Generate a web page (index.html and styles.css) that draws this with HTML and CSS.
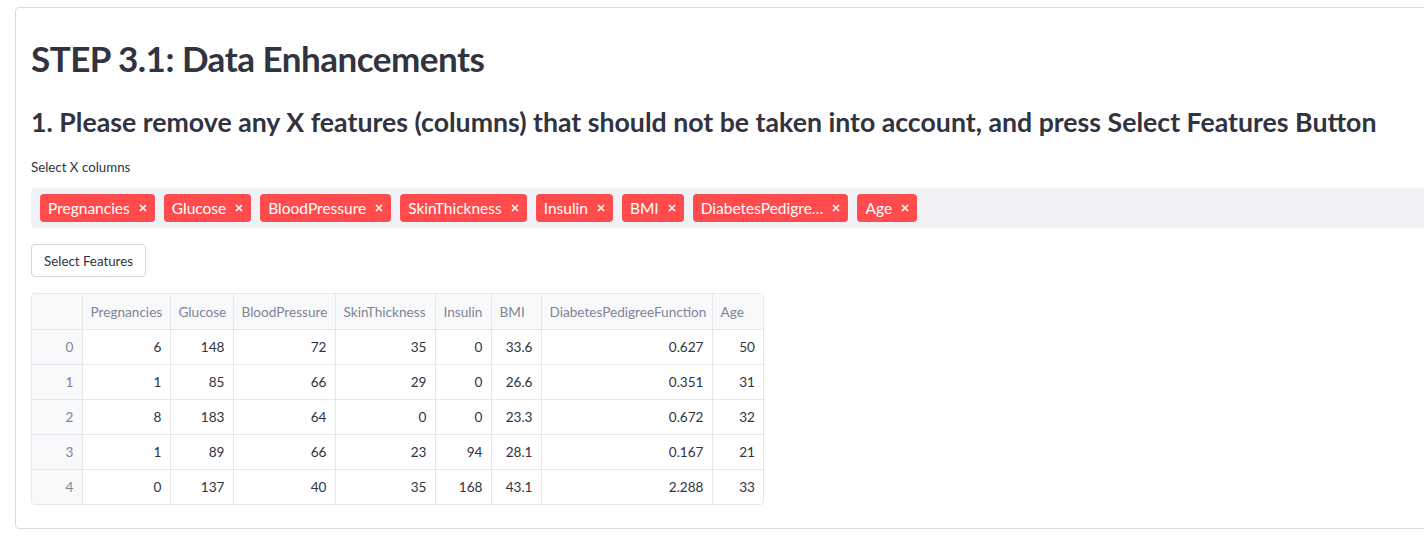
FILE: index.html
```html
<!DOCTYPE html>
<html lang="en">
<head>
<meta charset="utf-8">
<title>STEP 3.1: Data Enhancements</title>
<link rel="stylesheet" href="styles.css">
</head>
<body>
<main class="block">
  <h1 class="title">STEP 3.1: Data Enhancements</h1>
  <h2 class="subtitle">1. Please remove any X features (columns) that should not be taken into account, and press Select Features Button</h2>
  <div class="field-label">Select X columns</div>
  <div class="multiselect">
    <span class="tag"><span class="tag-text">Pregnancies</span><svg class="tag-x" viewBox="0 0 8 8"><path d="M1 1L7 7M7 1L1 7"/></svg></span>
    <span class="tag"><span class="tag-text">Glucose</span><svg class="tag-x" viewBox="0 0 8 8"><path d="M1 1L7 7M7 1L1 7"/></svg></span>
    <span class="tag"><span class="tag-text">BloodPressure</span><svg class="tag-x" viewBox="0 0 8 8"><path d="M1 1L7 7M7 1L1 7"/></svg></span>
    <span class="tag"><span class="tag-text">SkinThickness</span><svg class="tag-x" viewBox="0 0 8 8"><path d="M1 1L7 7M7 1L1 7"/></svg></span>
    <span class="tag"><span class="tag-text">Insulin</span><svg class="tag-x" viewBox="0 0 8 8"><path d="M1 1L7 7M7 1L1 7"/></svg></span>
    <span class="tag"><span class="tag-text">BMI</span><svg class="tag-x" viewBox="0 0 8 8"><path d="M1 1L7 7M7 1L1 7"/></svg></span>
    <span class="tag"><span class="tag-text">DiabetesPedigre…</span><svg class="tag-x" viewBox="0 0 8 8"><path d="M1 1L7 7M7 1L1 7"/></svg></span>
    <span class="tag"><span class="tag-text">Age</span><svg class="tag-x" viewBox="0 0 8 8"><path d="M1 1L7 7M7 1L1 7"/></svg></span>
  </div>
  <button class="btn" type="button">Select Features</button>
  <div class="table-wrap">
    <table class="df">
      <colgroup>
        <col class="c-idx"><col class="c-preg"><col class="c-glu"><col class="c-bp"><col class="c-skin"><col class="c-ins"><col class="c-bmi"><col class="c-dpf"><col class="c-age">
      </colgroup>
      <thead>
        <tr><th></th><th>Pregnancies</th><th>Glucose</th><th>BloodPressure</th><th>SkinThickness</th><th>Insulin</th><th>BMI</th><th>DiabetesPedigreeFunction</th><th>Age</th></tr>
      </thead>
      <tbody>
        <tr><th>0</th><td>6</td><td>148</td><td>72</td><td>35</td><td>0</td><td>33.6</td><td>0.627</td><td>50</td></tr>
        <tr><th>1</th><td>1</td><td>85</td><td>66</td><td>29</td><td>0</td><td>26.6</td><td>0.351</td><td>31</td></tr>
        <tr><th>2</th><td>8</td><td>183</td><td>64</td><td>0</td><td>0</td><td>23.3</td><td>0.672</td><td>32</td></tr>
        <tr><th>3</th><td>1</td><td>89</td><td>66</td><td>23</td><td>94</td><td>28.1</td><td>0.167</td><td>21</td></tr>
        <tr><th>4</th><td>0</td><td>137</td><td>40</td><td>35</td><td>168</td><td>43.1</td><td>2.288</td><td>33</td></tr>
      </tbody>
    </table>
  </div>
</main>
</body>
</html>
```
FILE: styles.css
```css
html, body {
  margin: 0;
  padding: 0;
  overflow: hidden;
  background: #ffffff;
}
body {
  font-family: Lato, "Noto Sans", sans-serif;
  color: #31333f;
}
.block {
  margin: 7px 0 0 15px;
  width: 1460px;
  border: 1px solid #dcdcdf;
  border-radius: 4px;
  padding: 29px 16px 20px 15px;
  box-sizing: border-box;
}
.title {
  margin: 0;
  font-size: 35px;
  line-height: 1.2;
  letter-spacing: -0.5px;
  font-weight: 700;
  color: #31333f;
}
.subtitle {
  margin: 27px 0 0;
  font-size: 26.7px;
  line-height: 1.2;
  font-weight: 700;
  color: #31333f;
}
.field-label {
  margin-top: 21px;
  font-size: 13.3px;
  line-height: 16px;
  color: #31333f;
}
.multiselect {
  margin-top: 13px;
  height: 40px;
  background: #f0f2f6;
  border-radius: 4px;
  display: flex;
  align-items: center;
  gap: 9px;
  padding-left: 9px;
}
.tag {
  display: inline-flex;
  align-items: center;
  height: 28px;
  background: #ff4b4b;
  color: #ffffff;
  border-radius: 4px;
  padding: 0 8px 0 8px;
  font-size: 15.5px;
}
.tag-x {
  width: 8px;
  height: 8px;
  margin-left: 9px;
  fill: none;
  stroke: #ffffff;
  stroke-width: 1.6;
}
.btn {
  display: block;
  margin-top: 16px;
  height: 33px;
  width: 115px;
  background: #ffffff;
  border: 1px solid #d5d6da;
  border-radius: 4px;
  font-family: inherit;
  font-size: 13.3px;
  color: #31333f;
  padding: 0;
}
.table-wrap {
  margin-top: 16px;
  display: inline-block;
  border: 1px solid #e6e7eb;
  border-radius: 4px;
  overflow: hidden;
}
.df {
  width: 731px;
  border-collapse: collapse;
  table-layout: fixed;
  font-size: 13.6px;
}
.c-idx { width: 50px; }
.c-preg { width: 88px; }
.c-glu { width: 63px; }
.c-bp { width: 102px; }
.c-skin { width: 100px; }
.c-ins { width: 56px; }
.c-bmi { width: 50px; }
.c-dpf { width: 171px; }
.c-age { width: 51px; }
.df th, .df td {
  border-left: 1px solid #e6e7eb;
  border-top: 1px solid #e6e7eb;
  padding: 0 8px;
  white-space: nowrap;
  overflow: hidden;
}
.df tr > :first-child { border-left: none; }
.df thead tr > * { border-top: none; }
.df thead th {
  height: 35px;
  background: #f8f9fb;
  color: #808495;
  font-weight: 400;
  text-align: left;
}
.df tbody th {
  background: #f8f9fb;
  color: #808495;
  font-weight: 400;
  text-align: right;
}
.df tbody td {
  height: 34px;
  text-align: right;
  color: #31333f;
}
```
